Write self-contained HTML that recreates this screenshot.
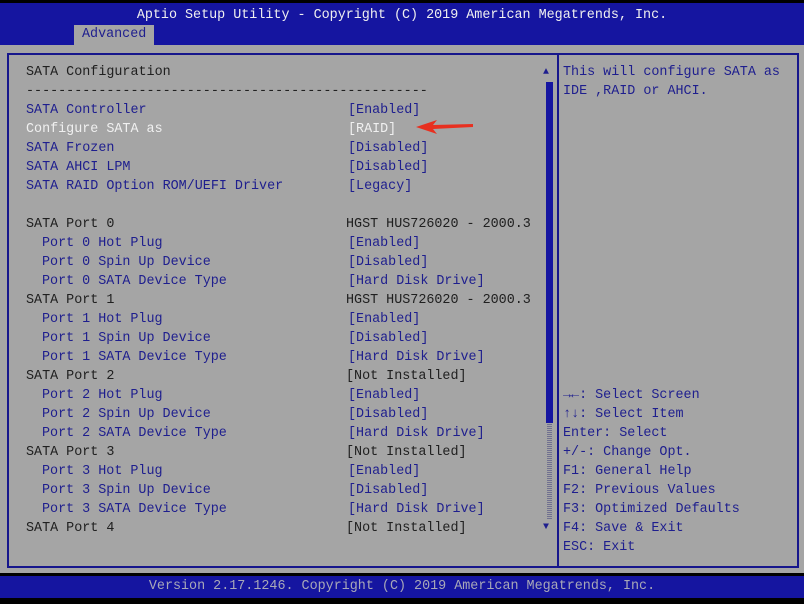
<!DOCTYPE html>
<html><head><style>
body{margin:0;width:804px;height:604px;background:#000;position:relative;overflow:hidden;font-family:"Liberation Mono",monospace;font-size:13.4px}
.a{position:absolute;white-space:pre;line-height:19px}
#top{position:absolute;left:0;top:3px;width:804px;height:42px;background:#1515a0}
#gray{position:absolute;left:0;top:45px;width:804px;height:528px;background:#a5a5a5}
#frame{position:absolute;left:7px;top:53px;width:788px;height:511px;border:2px solid #16168c}
#div{position:absolute;left:557px;top:53px;width:2px;height:513px;background:#16168c}
#bot{position:absolute;left:0;top:576px;width:804px;height:22px;background:#1515a0}
.b{color:#1e1e8e}.w{color:#f0f0f0}.k{color:#202020}
</style></head><body>
<div id="top"></div>
<div class="a" style="left:0;width:804px;text-align:center;top:6px;color:#f0f0f0">Aptio Setup Utility - Copyright (C) 2019 American Megatrends, Inc.</div>
<div style="position:absolute;left:74px;top:25px;width:80px;height:20px;background:#a5a5a5"></div>
<div class="a b" style="left:82px;top:25px">Advanced</div>
<div id="gray"></div>
<div id="frame"></div>
<div id="div"></div>
<div style="position:absolute;left:546px;top:82px;width:7px;height:341px;background:#1515a0"></div>
<div style="position:absolute;left:547px;top:423px;width:5px;height:96px;background:repeating-linear-gradient(0deg,#707090 0 1px,#a5a5a5 1px 2px)"></div>
<div class="a b" style="left:543px;top:63px;font-size:10px">▲</div>
<div class="a b" style="left:543px;top:518px;font-size:10px">▼</div>
<div class="a k" style="left:26px;top:63px">SATA Configuration
--------------------------------------------------</div>
<div class="a b" style="left:26px;top:101px">SATA Controller</div>
<div class="a w" style="left:26px;top:120px">Configure SATA as</div>
<div class="a b" style="left:26px;top:139px">SATA Frozen
SATA AHCI LPM
SATA RAID Option ROM/UEFI Driver</div>
<div class="a k" style="left:26px;top:215px">SATA Port 0



SATA Port 1



SATA Port 2



SATA Port 3



SATA Port 4</div>
<div class="a b" style="left:42px;top:234px">Port 0 Hot Plug
Port 0 Spin Up Device
Port 0 SATA Device Type

Port 1 Hot Plug
Port 1 Spin Up Device
Port 1 SATA Device Type

Port 2 Hot Plug
Port 2 Spin Up Device
Port 2 SATA Device Type

Port 3 Hot Plug
Port 3 Spin Up Device
Port 3 SATA Device Type</div>
<div class="a b" style="left:348px;top:101px">[Enabled]</div>
<div class="a w" style="left:348px;top:120px">[RAID]</div>
<div class="a b" style="left:348px;top:139px">[Disabled]
[Disabled]
[Legacy]</div>
<div class="a k" style="left:346px;top:215px">HGST HUS726020 - 2000.3



HGST HUS726020 - 2000.3



[Not Installed]



[Not Installed]



[Not Installed]</div>
<div class="a b" style="left:348px;top:234px">[Enabled]
[Disabled]
[Hard Disk Drive]

[Enabled]
[Disabled]
[Hard Disk Drive]

[Enabled]
[Disabled]
[Hard Disk Drive]

[Enabled]
[Disabled]
[Hard Disk Drive]</div>
<svg style="position:absolute;left:415px;top:119px" width="60" height="16"><path d="M1 8 L22 1 L18 6 L58 5 L58 8 L18 10 L22 15 Z" fill="#e83020"/></svg>
<div class="a b" style="left:563px;top:63px">This will configure SATA as
IDE ,RAID or AHCI.</div>
<div class="a b" style="left:563px;top:386px">→←: Select Screen
↑↓: Select Item
Enter: Select
+/-: Change Opt.
F1: General Help
F2: Previous Values
F3: Optimized Defaults
F4: Save &amp; Exit
ESC: Exit</div>
<div id="bot"></div>
<div class="a" style="left:0;width:804px;text-align:center;top:577px;color:#a8a8b8">Version 2.17.1246. Copyright (C) 2019 American Megatrends, Inc.</div>
</body></html>
